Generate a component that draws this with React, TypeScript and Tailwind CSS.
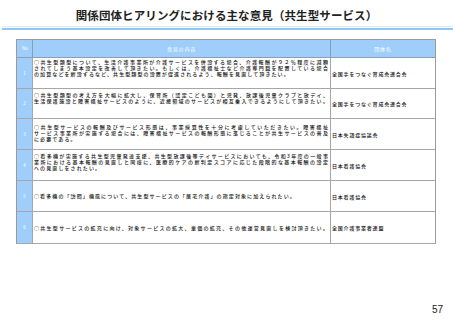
import React from "react";

const jp = { fontFamily: '"Noto Sans CJK JP", "Noto Sans", sans-serif' };

type Row = { no: string; lines: string[]; org: string; h: string; pt: string; center?: boolean; fullLast?: boolean };

const rows: Row[] = [
  {
    no: "1",
    lines: [
      "○共生型類型について、生活介護事業所が介護サービスを併設する場合、介護報酬が９２％程度に減額",
      "されてしまう基本設定を改善して頂きたい。もしくは、介護福祉士など介護専門職を配置している場合",
      "の加算などを新設するなど、共生型類型の設置が促進されるよう、報酬を見直して頂きたい。",
    ],
    org: "全国手をつなぐ育成会連合会",
    h: "h-[31px]",
    pt: "pt-[1px]",
  },
  {
    no: "2",
    lines: [
      "○共生型類型の考え方を大幅に拡大し、保育所（認定こども園）と児発、放課後児童クラブと放デイ、",
      "生活保護施設と障害福祉サービスのように、近接領域のサービスが相互乗入できるようにして頂きたい。",
    ],
    org: "全国手をつなぐ育成会連合会",
    h: "h-[30px]",
    pt: "pt-[3px]",
    fullLast: true,
  },
  {
    no: "3",
    lines: [
      "○共生型サービスの報酬及びサービス形態は、事業採算性を十分に考慮していただきたい。障害福祉",
      "サービス事業所が実施する場合には、障害福祉サービスの報酬形態に準じることが共生サービスの普及",
      "に必要である。",
    ],
    org: "日本失語症協議会",
    h: "h-[31px]",
    pt: "pt-[5px]",
  },
  {
    no: "4",
    lines: [
      "○看多機が実施する共生型児童発達支援、共生型放課後等デイサービスにおいても、令和3年度の一般事",
      "業所における基本報酬の見直しと同様に、医療的ケアの新判定スコアに応じた段階的な基本報酬の設定",
      "への見直しをされたい。",
    ],
    org: "日本看護協会",
    h: "h-[31px]",
    pt: "pt-[3px]",
  },
  {
    no: "5",
    lines: ["○看多機の「訪問」機能について、共生型サービスの「居宅介護」の指定対象に加えられたい。"],
    org: "日本看護協会",
    h: "h-[31px]",
    pt: "",
    center: true,
  },
  {
    no: "6",
    lines: ["○共生型サービスの拡充に向け、対象サービスの拡大、単価の拡充、その他運営見直しを検討頂きたい。"],
    org: "全国介護事業者連盟",
    h: "h-[31px]",
    pt: "",
    center: true,
    fullLast: true,
  },
];

export default function App() {
  return (
    <div className="w-[453px] h-[320px] bg-white flex flex-col overflow-hidden text-[#222]" style={jp}>
      <div className="h-[26px] pt-[6px] flex items-center justify-center">
        <span className="text-[11.5px] font-bold leading-none tracking-[0.1px]">
          関係団体ヒアリングにおける主な意見（共生型サービス）
        </span>
      </div>
      <div className="ml-[2px] h-px bg-[#d8ecfb]" />
      <div className="ml-[2px] mt-[1px] h-[2px] bg-[#8fc6f2]" />

      <div className="mt-[9px] ml-[16px] w-[420px] border border-[#9a9a9a] border-b-[#a8a8a8]">
        <div className="flex h-[18px] bg-[#9fcefb] border-b border-[#8a9fb5] text-white">
          <div className="w-[15px] flex items-center pl-[5px] text-[4.5px] leading-none">No</div>
          <div className="w-[298px] border-l border-[#8a9fb5] flex items-center justify-center text-[5px] tracking-[0.8px] leading-none">
            意見の内容
          </div>
          <div className="flex-1 border-l border-[#8a9fb5] flex items-center justify-center text-[5px] tracking-[0.8px] leading-none">
            団体名
          </div>
        </div>
        {rows.map((r, i) => (
          <div
            key={r.no}
            className={`flex ${r.h} ${i < rows.length - 1 ? "border-b border-[#a6a6a6]" : ""}`}
          >
            <div className="w-[15px] shrink-0 bg-[#9fcefb] flex items-center justify-center text-white text-[4.5px] leading-none">
              {r.no}
            </div>
            <div
              className={`w-[298px] shrink-0 border-l border-[#a6a6a6] pl-[1px] pr-[1px] flex flex-col ${
                r.center ? "justify-center" : r.pt
              }`}
            >
              <div className="w-[295px] text-[5px] tracking-[1.1px] leading-[6px] font-medium text-[#111]">
                {r.lines.map((l, j) => {
                  const full = j < r.lines.length - 1 || r.fullLast;
                  return (
                    <span
                      key={l}
                      className={`block whitespace-nowrap ${full ? "text-justify [text-align-last:justify]" : ""}`}
                    >
                      {l}
                    </span>
                  );
                })}
              </div>
            </div>
            <div className="flex-1 border-l border-[#a6a6a6] pl-[1px] flex items-center text-[5px] tracking-[0.8px] leading-none font-medium text-[#111] whitespace-nowrap">
              {r.org}
            </div>
          </div>
        ))}
      </div>

      <div className="mt-auto flex justify-end pr-[10px] pb-[5px]">
        <span className="text-[10px] leading-[10px]" style={{ fontFamily: '"Liberation Sans", Arial, sans-serif' }}>
          57
        </span>
      </div>
    </div>
  );
}
